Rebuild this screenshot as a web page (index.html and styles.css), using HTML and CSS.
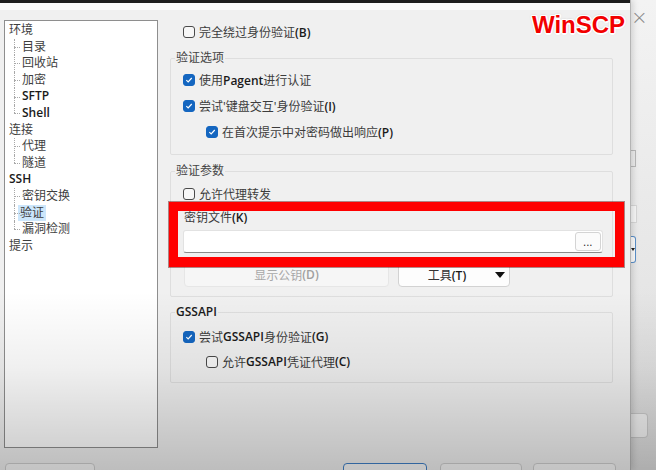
FILE: index.html
```html
<!DOCTYPE html>
<html lang="zh-CN">
<head>
<meta charset="utf-8">
<title>高级站点设置</title>
<link rel="stylesheet" href="styles.css">
</head>
<body>
<div class="screen">
  <div class="dialog">
    <div class="titlebar"></div>
    <div class="whitebar"></div>
    <div class="main">
      <div class="tree">
        <div class="node root">环境</div>
        <div class="node child">目录</div>
        <div class="node child">回收站</div>
        <div class="node child">加密</div>
        <div class="node child lat">SFTP</div>
        <div class="node child last lat">Shell</div>
        <div class="node root">连接</div>
        <div class="node child">代理</div>
        <div class="node child last">隧道</div>
        <div class="node root lat">SSH</div>
        <div class="node child">密钥交换</div>
        <div class="node child"><span class="sel">验证</span></div>
        <div class="node child last">漏洞检测</div>
        <div class="node root">提示</div>
      </div>
      <div class="pane">
        <label class="row top-row"><span class="cb"></span>完全绕过身份验证<b>(B)</b></label>

        <fieldset class="group g1">
          <legend>验证选项</legend>
          <label class="row"><span class="cb on"><svg viewBox="0 0 12 12"><polyline points="2.8,6.2 5,8.3 9.3,3.6"/></svg></span>使用<b>Pagent</b>进行认证</label>
          <label class="row"><span class="cb on"><svg viewBox="0 0 12 12"><polyline points="2.8,6.2 5,8.3 9.3,3.6"/></svg></span>尝试'键盘交互'身份验证<b>(I)</b></label>
          <label class="row sub"><span class="cb on"><svg viewBox="0 0 12 12"><polyline points="2.8,6.2 5,8.3 9.3,3.6"/></svg></span>在首次提示中对密码做出响应<b>(P)</b></label>
        </fieldset>

        <fieldset class="group g2">
          <legend>验证参数</legend>
          <label class="row"><span class="cb"></span>允许代理转发</label>
          <div class="field-label">密钥文件<b>(K)</b></div>
          <div class="input"><span class="browse">...</span></div>
          <div class="btnrow">
            <span class="btn disabled">显示公钥<b>(D)</b></span>
            <span class="btn drop"><span class="btn-text">工具<b>(T)</b></span><span class="tri"></span></span>
          </div>
        </fieldset>

        <fieldset class="group g3">
          <legend><b>GSSAPI</b></legend>
          <label class="row"><span class="cb on"><svg viewBox="0 0 12 12"><polyline points="2.8,6.2 5,8.3 9.3,3.6"/></svg></span>尝试<b>GSSAPI</b>身份验证<b>(G)</b></label>
          <label class="row sub"><span class="cb"></span>允许<b>GSSAPI</b>凭证代理<b>(C)</b></label>
        </fieldset>
      </div>
    </div>
    <div class="footer">
      <span class="fbtn f1"></span>
      <span class="fbtn f2"></span>
      <span class="fbtn f3"></span>
      <span class="fbtn f4"></span>
    </div>
  </div>
  <div class="behind">
    <div class="close">×</div>
    <div class="b-icon"></div>
    <div class="b-box"></div>
    <div class="b-drop"><span class="b-tri"></span></div>
    <div class="b-btn"></div>
  </div>
</div>
<div class="annot-box"></div>
<div class="brand">WinSCP</div>
<div class="vignette"></div>
</body>
</html>
```

FILE: styles.css
```css
* { box-sizing: border-box; }
html, body { margin: 0; padding: 0; }
body {
  width: 656px;
  height: 470px;
  overflow: hidden;
  position: relative;
  background: #e9e9e9;
  font-family: "Noto Sans", "Noto Sans CJK SC", sans-serif;
  font-size: 12px;
  color: #3c3c3c;
}
b {
  font-family: "Open Sans", "Noto Sans", sans-serif;
  font-weight: 600;
  color: #1a1a1a;
}

.screen { display: flex; height: 470px; }

.dialog {
  width: 630px;
  flex: none;
  background: #f0f0f0;
  display: flex;
  flex-direction: column;
  box-shadow: 1px 0 0 #b4b4b4, 3px 0 6px rgba(0,0,0,0.14);
  position: relative;
  z-index: 1;
}
.dialog > * { flex: none; }
.titlebar { height: 3px; background: #1e1e1e; }
.whitebar { height: 7px; background: #fbfbfb; }

.main { display: flex; padding-top: 10px; }

.tree {
  margin-left: 4px;
  width: 154px;
  height: 428px;
  border: 1px solid #8e8e8e;
  background: #fff;
  padding-top: 1px;
  line-height: 16.6px;
  color: #3e3e3e;
}
.node { position: relative; height: 16.6px; white-space: nowrap; }
.node.root { padding-left: 4px; }
.node.child { padding-left: 17px; }
.node.lat {
  color: #1a1a1a;
  font-family: "Open Sans", "Noto Sans", sans-serif;
  font-weight: 600;
}
.node.child::before {
  content: "";
  position: absolute;
  left: 9px; top: 0; bottom: 0;
  border-left: 1px dotted #a8a8a8;
}
.node.child.last::before { bottom: 50%; }
.node.child::after {
  content: "";
  position: absolute;
  left: 9px; top: 50%;
  width: 6px;
  border-top: 1px dotted #a8a8a8;
}
.sel {
  display: inline-block;
  background: #cce6fb;
  padding: 0 2px;
  margin-left: -4px;
  line-height: 16px;
}

.pane { margin-left: 12px; width: 443px; }

.row {
  display: flex;
  align-items: center;
  height: 26px;
  white-space: nowrap;
}
.top-row { height: 24px; padding-left: 13px; }
.row.sub { padding-left: 23px; }

.cb {
  width: 12px; height: 12px;
  flex: none;
  border: 1px solid #4a4a4a;
  border-radius: 3px;
  background: #f7f7f7;
  margin-right: 4px;
  display: inline-flex;
}
.cb.on { background: #1466c0; border-color: #1466c0; }
.cb svg { width: 10px; height: 10px; }
.cb polyline { fill: none; stroke: #fff; stroke-width: 1.4; }

.group {
  margin: 0;
  border: 1px solid #dedede;
  border-radius: 2px;
  padding: 0 9px 0 12px;
  min-width: 0;
}
.group legend {
  padding: 0 1px 0 1px;
  margin-left: -8px;
  line-height: 14px;
  color: #444;
}
.g1 { margin-top: 7px; padding-top: 2px; padding-bottom: 9px; }
.g2 { margin-top: 9px; padding-top: 3px; padding-bottom: 9px; }
.g3 { margin-top: 8px; padding-top: 5px; padding-bottom: 8px; }
.g3 .row { height: 25px; }

.field-label { margin-top: 3px; line-height: 16px; padding-left: 1px; }
.input {
  margin-top: 4px;
  height: 23px;
  background: #fff;
  border: 1px solid #e2e2e2;
  border-bottom-color: #8a8a8a;
  border-radius: 3px;
  display: flex;
  align-items: center;
  justify-content: flex-end;
  padding-right: 1px;
}
.browse {
  width: 26px; height: 19px;
  background: #fbfbfb;
  border: 1px solid #d4d4d4;
  border-radius: 3px;
  font-size: 10px;
  line-height: 18px;
  text-align: center;
  color: #222;
  letter-spacing: 0.5px;
}
.btnrow { display: flex; gap: 9px; margin-top: 9px; padding-left: 1px; }
.btn {
  height: 25px;
  border: 1px solid #d2d2d2;
  border-radius: 4px;
  background: #fdfdfd;
  display: flex;
  align-items: center;
  justify-content: center;
}
.btn.disabled { width: 205px; background: #f6f6f6; border-color: #e6e6e6; color: #a8a8a8; }
.btn.disabled b { color: #a0a0a0; }
.btn.drop { width: 112px; padding-right: 4px; }
.btn-text { flex: 1; text-align: center; color: #333; }
.tri {
  width: 0; height: 0;
  border-left: 5px solid transparent;
  border-right: 5px solid transparent;
  border-top: 6px solid #111;
}

.footer { display: flex; margin-top: 15px; padding-left: 5px; }
.fbtn {
  height: 24px;
  background: #f8f8f8;
  border: 1px solid #cfcfcf;
  border-radius: 4px;
}
.f1 { width: 90px; }
.f2 { width: 84px; margin-left: 248px; border-color: #3f7fc6; }
.f3 { width: 82px; margin-left: 13px; }
.f4 { width: 83px; margin-left: 11px; }

.behind {
  flex: 1;
  background: linear-gradient(#f3f3f3 0, #e6e6e6 60%, #dcdcdc 100%);
  display: flex;
  flex-direction: column;
  align-items: flex-start;
}
.behind > * { flex: none; }
.close {
  margin: 6px 0 0 1px;
  font-size: 20px;
  line-height: 22px;
  color: #8a8a8a;
  font-family: "DejaVu Sans", sans-serif;
  font-weight: 300;
}
.b-icon {
  margin-top: 122px;
  width: 6px; height: 17px;
  border: 1px solid #b8b8b8;
  border-left: none;
}
.b-box {
  margin-top: 38px;
  width: 7px; height: 18px;
  background: #f6f6f6;
  border: 1px solid #d6d6d6;
  border-left: none;
}
.b-drop {
  margin-top: 13px;
  width: 6px; height: 27px;
  background: #fbfbfb;
  border: 1px solid #5b8fc8;
  border-left: none;
  border-radius: 0 3px 3px 0;
  display: flex;
  align-items: center;
}
.b-tri {
  width: 0; height: 0;
  border-left: 2px solid transparent;
  border-right: 2px solid transparent;
  border-top: 3px solid #222;
  margin-left: 1px;
}
.b-btn {
  margin-top: 150px;
  width: 18px; height: 25px;
  background: #f2f2f2;
  border: 1px solid #cacaca;
  border-left: none;
  border-radius: 0 4px 4px 0;
}

.annot-box {
  position: absolute;
  left: 169px; top: 202px;
  width: 455px; height: 65px;
  border: 9px solid #ff0000;
  border-bottom-width: 10px;
  box-shadow: 0 0 0 1px rgba(90,0,0,0.45);
  z-index: 5;
}
.brand {
  position: absolute;
  left: 532px; top: 12px;
  font-family: "Liberation Sans", Arial, sans-serif;
  font-weight: 700;
  font-size: 24px;
  line-height: 26px;
  color: #f20000;
  text-shadow:
    -1.5px 0 0 #fff, 1.5px 0 0 #fff, 0 -1.5px 0 #fff, 0 1.5px 0 #fff,
    -1px -1px 0 #fff, 1px 1px 0 #fff, -1px 1px 0 #fff, 1px -1px 0 #fff,
    0 0 3px rgba(0,0,0,0.35);
  z-index: 6;
}
.vignette {
  position: absolute;
  left: 0; top: 0; right: 0; bottom: 0;
  pointer-events: none;
  background: linear-gradient(to bottom, rgba(0,0,0,0) 0, rgba(0,0,0,0) 62%, rgba(0,0,0,0.06) 78%, rgba(0,0,0,0.21) 100%);
  z-index: 10;
}
```
